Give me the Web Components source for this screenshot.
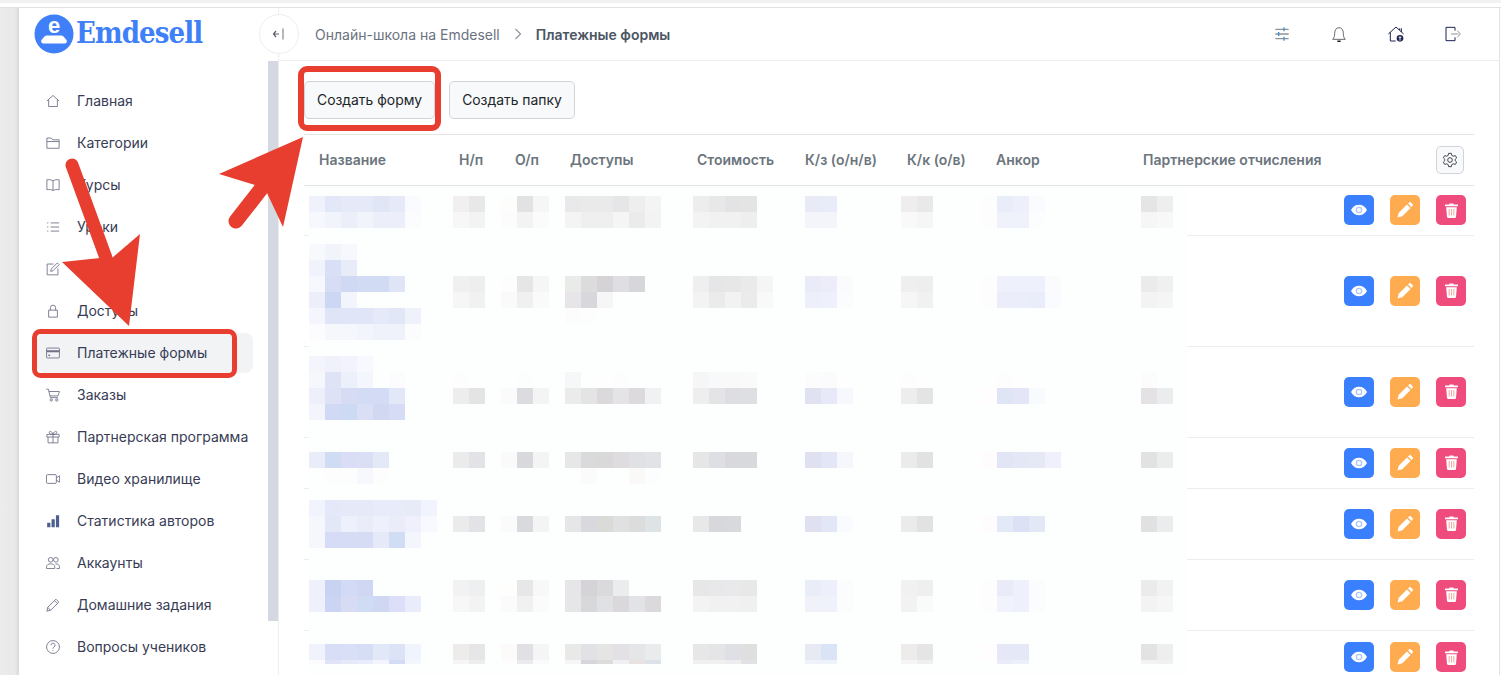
<!DOCTYPE html>
<html lang="ru">
<head>
<meta charset="utf-8">
<title>Платежные формы</title>
<style>
  html, body { margin: 0; padding: 0; height: 675px; overflow: hidden; background: #fff; }
  body { font-family: Inter, "Noto Sans", sans-serif; font-size: 14px; display: flex; flex-direction: column; }
</style>
</head>
<body>
<window-strip></window-strip>
<app-shell>
  <side-nav slot="side">
    <nav-item icon="home">Главная</nav-item>
    <nav-item icon="folder">Категории</nav-item>
    <nav-item icon="book">Курсы</nav-item>
    <nav-item icon="list">Уроки</nav-item>
    <nav-item icon="edit">Тесты</nav-item>
    <nav-item icon="lock">Доступы</nav-item>
    <nav-item icon="card" active>Платежные формы</nav-item>
    <nav-item icon="cart">Заказы</nav-item>
    <nav-item icon="gift">Партнерская программа</nav-item>
    <nav-item icon="video">Видео хранилище</nav-item>
    <nav-item icon="stats">Статистика авторов</nav-item>
    <nav-item icon="users">Аккаунты</nav-item>
    <nav-item icon="pencil">Домашние задания</nav-item>
    <nav-item icon="question">Вопросы учеников</nav-item>
  </side-nav>
  <top-bar></top-bar>
  <page-toolbar>
    <plain-button>Создать форму</plain-button>
    <plain-button>Создать папку</plain-button>
  </page-toolbar>
  <form-table></form-table>
</app-shell>
<red-markup></red-markup>

<script>
const ICONS = {
  home: '<path d="M1.500 12 12 2.500 22.500 12M4.500 9.500v12h15v-12"/>',
  folder: '<path d="M1.500 21V3.500H9l2.500 3h11V21z"/><path d="M1.500 9.500h21"/>',
  book: '<path d="M12 5C10 3 6 2.500 1.500 3v17c4.500-.5 8.500 0 10.500 1.500C14 20 18 19.500 22.500 20V3C18 2.500 14 3 12 5zM12 5v16.500"/>',
  list: '<path d="M8 5h14.500M8 12h14.500M8 19h14.500M2 5h2M2 12h2M2 19h2"/>',
  edit: '<path d="M13 3.500H2V22h18.500V11"/><path d="M19.500 1.500 22.500 4.500 12 15l-4 1 1-4z"/>',
  lock: '<path d="M4.500 10.500h15v12h-15z"/><path d="M7.500 10.500V6.500a4.500 4.500 0 0 1 9 0v4"/>',
  card: '<rect x="1" y="3.500" width="22" height="17" rx="1.500"/><path d="M1 9h22" stroke-width="3.500"/><path d="M4 16h3" stroke-width="2.500"/>',
  cart: '<path d="M.5 2h3.500l3.500 14.500h13M5 6h18l-2.500 7.500H7"/><circle cx="9" cy="20.500" r="2"/><circle cx="18.500" cy="20.500" r="2"/>',
  gift: '<path d="M1.500 7.500h21V12h-21zM3.500 12v10h17V12M12 7.500V22"/><path d="M12 7.500C10.500 2.500 6 .5 5.500 4c-.3 3 3.500 3.500 6.500 3.500zM12 7.500c1.500-5 6-7 6.500-3.500.3 3-3.500 3.500-6.500 3.500z"/>',
  video: '<rect x=".8" y="4.500" width="17" height="15" rx="2"/><path d="m17.800 10 5.500-3.500v11L17.800 14"/>',
  users: '<circle cx="8" cy="6.500" r="4"/><circle cx="17" cy="6.500" r="4"/><path d="M1 21.500v-3c0-3.500 3-5 7-5s7 1.500 7 5v3zM16 13.500c4.500 0 7 1.500 7 5v3h-5"/>',
  pencil: '<path d="m1.500 22.500 1.500-6.500L17 2l5 5-14 14z"/><path d="m14.500 4.500 5 5M3 16l5 5"/>',
  question: '<circle cx="12" cy="12" r="11"/><path d="M8.500 9a3.500 3.500 0 1 1 5.200 3c-1.200.7-1.700 1.500-1.700 3M12 17.500v1.500"/>',
  stats: '<path fill="#4d5f8f" stroke="none" d="M2 15h5.500v7.500H2zM9.500 9h5.500v13.500H9.500zM17 2h5.500v20.500H17z"/>'
};

class WindowStrip extends HTMLElement {
  connectedCallback() {
    this.attachShadow({ mode: 'open' }).innerHTML = `
      <style>
        :host { display: block; height: 3px; background: #f1f2f3; margin-bottom: 4px; flex: none; }
      </style>`;
  }
}

class AppShell extends HTMLElement {
  connectedCallback() {
    this.attachShadow({ mode: 'open' }).innerHTML = `
      <style>
        :host { display: flex; flex: 1; min-height: 0; border-top: 1px solid #e2e2e2; }
        .gutter {
          width: 19px;
          flex: none;
          background: linear-gradient(90deg, #ececec 0, #e9e9e9 15px, #d9d9d9 19px);
        }
        main {
          position: relative;
          z-index: 1;
          flex: 1;
          min-width: 0;
          display: flex;
          flex-direction: column;
          margin-right: 1px;
          border-right: 1px solid #e2e2e2;
          border-left: 1px solid #eeeeee;
        }
      </style>
      <div class="gutter"></div>
      <slot name="side"></slot>
      <main><slot></slot></main>`;
  }
}

class SideNav extends HTMLElement {
  connectedCallback() {
    this.attachShadow({ mode: 'open' }).innerHTML = `
      <style>
        :host { display: flex; flex-direction: column; width: 259px; flex: none; background: #fff; }
        .logo { height: 53px; flex: none; display: flex; align-items: center; padding-left: 15px; gap: 2px; overflow: hidden; }
        .logo svg { display: block; margin-top: -1px; flex: none; }
        .word {
          font-family: "DejaVu Serif", serif;
          font-stretch: condensed;
          font-weight: 700;
          font-size: 29px;
          line-height: 1;
          color: #3f80f8;
          letter-spacing: -0.9px;
          margin-top: -2px;
        }
        .body { flex: 1; display: flex; min-height: 0; }
        .list { flex: 1; display: flex; flex-direction: column; gap: 2px; padding: 20px 15px 0 18px; }
        .thumb { width: 10px; height: 560px; background: #d3d8e1; flex: none; }
      </style>
      <div class="logo">
        <svg width="40" height="40" viewBox="0 0 40 40">
          <circle cx="20" cy="20" r="19.500" fill="#3f80f8"/>
          <text x="20" y="19" text-anchor="middle" font-family="Liberation Sans, sans-serif" font-weight="700" font-size="22" fill="#fff">e</text>
          <path fill="#fff" d="M12.500 21.500h15c2 0 3 2.500 5 4.500 1 1.500 0 3.500-2 3.500h-21c-2 0-3-2-2-3.500 2-2 3-4.500 5-4.500z"/>
        </svg>
        <span class="word">Emdesell</span>
      </div>
      <div class="body">
        <div class="list"><slot></slot></div>
        <div class="thumb"></div>
      </div>`;
  }
}

class NavItem extends HTMLElement {
  connectedCallback() {
    const icon = ICONS[this.getAttribute('icon')] || '';
    this.attachShadow({ mode: 'open' }).innerHTML = `
      <style>
        :host {
          display: flex;
          align-items: center;
          flex: none;
          height: 40px;
          padding-left: 9px;
          gap: 17px;
          border-radius: 8px;
          color: #383c55;
          font-size: 14px;
          white-space: nowrap;
        }
        :host([active]) { background: #f1f3f5; }
        svg { width: 14px; height: 14px; flex: none; fill: none; stroke: #6f7187; stroke-width: 1.500; }
        .label { margin-top: -2px; }
      </style>
      <svg viewBox="0 0 24 24">${icon}</svg>
      <span class="label"><slot></slot></span>`;
  }
}

class TopBar extends HTMLElement {
  connectedCallback() {
    this.attachShadow({ mode: 'open' }).innerHTML = `
      <style>
        :host {
          display: flex;
          align-items: center;
          height: 52px;
          flex: none;
          border-bottom: 1px solid #eeeeee;
          font-size: 14px;
          color: #6b7280;
        }
        .toggle {
          width: 38px;
          height: 38px;
          margin-left: -20px;
          border: 1px solid #eeeeee;
          border-radius: 50%;
          background: #fff;
          display: flex;
          align-items: center;
          justify-content: center;
          flex: none;
        }
        .crumb { margin-left: 16px; }
        .sep { margin: 0 14px 0 14px; display: block; }
        .current { font-weight: 600; color: #4b5563; }
        .icons { margin-left: auto; display: flex; gap: 41px; padding-right: 38px; }
        .icons svg { display: block; width: 16px; height: 16px; fill: none; }
      </style>
      <div class="toggle">
        <svg width="14" height="14" viewBox="0 0 14 14" fill="none" stroke="#5b6068" stroke-width="1.200">
          <path d="M7 7H1.500M4 4 1.500 7 4 10"/><path d="M11 1.500v11" stroke="#888"/>
        </svg>
      </div>
      <span class="crumb">Онлайн-школа на Emdesell</span>
      <svg class="sep" width="8" height="12" viewBox="0 0 8 12" fill="none" stroke="#8a9099" stroke-width="1.100"><path d="m1.500 1 5 5-5 5"/></svg>
      <span class="current">Платежные формы</span>
      <div class="icons">
        <svg viewBox="0 0 24 24" stroke="#8d9298" stroke-width="2">
          <path d="M2 5h20M2 12h20M2 19h20"/>
          <path d="M15 2v6M7 9v6M15 16v6" stroke="#3f90d8"/>
        </svg>
        <svg viewBox="0 0 24 24" stroke="#5b6068" stroke-width="1.400">
          <path d="M2.500 20c2.500-2.500 3-5 3-9 0-5 2.500-8.500 6.500-8.500s6.500 3.500 6.500 8.500c0 4 .5 6.500 3 9z"/>
          <path d="M9.500 23h5" stroke="#222" stroke-width="2.500"/>
        </svg>
        <svg viewBox="0 0 24 24" stroke="#1d2350" stroke-width="1.500">
          <path d="M.5 12 12 1.500 23.500 12M3.500 9.500V22.500h8M20 9V3.500M17.500 6V3.500"/>
          <circle cx="18" cy="18.500" r="5" fill="#1d2350" stroke="none"/>
          <path d="M18 22v-6M16 18l2-2 2 2" stroke="#fff" stroke-width="1.400"/>
        </svg>
        <svg viewBox="0 0 24 24" stroke="#1d2350" stroke-width="1.500">
          <path d="M15 7V2H1.500v20H15v-5"/>
          <path d="M9 12h11M18.500 7l4.500 5-4.500 5" stroke="#8d9298"/>
        </svg>
      </div>`;
  }
}

class PageToolbar extends HTMLElement {
  connectedCallback() {
    this.attachShadow({ mode: 'open' }).innerHTML = `
      <style>
        :host { display: flex; gap: 14px; padding: 20px 0 15px 25px; flex: none; }
      </style>
      <slot></slot>`;
  }
}

class PlainButton extends HTMLElement {
  connectedCallback() {
    this.attachShadow({ mode: 'open' }).innerHTML = `
      <style>
        :host {
          display: flex;
          align-items: center;
          justify-content: center;
          box-sizing: border-box;
          height: 38px;
          padding: 0 12px 1px;
          background: #f8f9fa;
          border: 1px solid #ced4da;
          border-radius: 5px;
          color: #212529;
          font-size: 13.900px;
          white-space: nowrap;
        }
      </style>
      <slot></slot>`;
  }
}

class BlurBlock extends HTMLElement {
  connectedCallback() {
    const lines = (this.getAttribute('c') || '').split(';');
    const cells = lines.map((line) => `<div class="line">${line.split(',').map((c) =>
      `<i style="background:${c === '.' ? 'transparent' : '#' + c}"></i>`).join('')}</div>`).join('');
    this.attachShadow({ mode: 'open' }).innerHTML = `
      <style>
        :host {
          display: block;
          margin-top: calc(var(--pad, 0px) + ${Number(this.getAttribute('skip') || 0) * 16}px);
          max-height: var(--clip, none);
          overflow: hidden;
        }
        .line { display: flex; height: 16px; }
        i { display: block; width: 16px; height: 16px; flex: none; }
      </style>
      ${cells}`;
  }
}

class RowActions extends HTMLElement {
  connectedCallback() {
    this.attachShadow({ mode: 'open' }).innerHTML = `
      <style>
        :host {
          grid-column: -2;
          align-self: center;
          display: flex;
          gap: 16px;
          padding-right: 8px;
          margin-bottom: 2px;
        }
        span { width: 30px; height: 30px; border-radius: 5px; display: flex; align-items: center; justify-content: center; }
        svg { display: block; }
        .view { background: #3a7ffd; }
        .edit { background: #ffab4f; }
        .del { background: #ef4b7c; }
      </style>
      <span class="view">
        <svg width="16" height="12" viewBox="0 0 16 12"><path fill="#fff" d="M0 6c1.800-3.500 4.700-5.300 8-5.300S14.200 2.500 16 6c-1.800 3.500-4.700 5.300-8 5.300S1.800 9.500 0 6z"/><circle cx="8" cy="6" r="3.300" fill="#a9c7fe"/><circle cx="8" cy="6" r="2" fill="#fff"/></svg>
      </span>
      <span class="edit">
        <svg width="16" height="16" viewBox="0 0 16 16"><path fill="#fff" d="m.5 15.500 1.200-4.800 8.300-8.300 3.600 3.600-8.300 8.300zM11 1.500 12.300.3c.4-.4 1-.4 1.400 0l2 2c.4.4.4 1 0 1.400L14.500 5z"/></svg>
      </span>
      <span class="del">
        <svg width="13" height="15" viewBox="0 0 14 16"><path fill="#fff" d="M0 1.500h4.500L5 .5h4l.5 1H14V3.500H0zM1.300 4.500h11.400l-.8 10.200c-.1.8-.6 1.300-1.300 1.300H3.400c-.7 0-1.200-.5-1.300-1.300z"/><path stroke="#f7a7a0" stroke-width="1.100" d="M4.500 6.500v7M7 6.500v7M9.500 6.500v7"/></svg>
      </span>`;
  }
}

class FormRow extends HTMLElement {
  connectedCallback() {
    this.attachShadow({ mode: 'open' }).innerHTML = `
      <style>
        :host {
          display: grid;
          grid-template-columns: 144px 48px 64px 128px 112px 96px 80px 160px 1fr auto;
          align-items: start;
          box-sizing: border-box;
          height: ${this.getAttribute('h')}px;
          padding-left: 5px;
          --pad: ${this.getAttribute('pad')}px;
          background:
            linear-gradient(#ecedf1, #ecedf1) left bottom / 5px 1px no-repeat,
            linear-gradient(#ecedf1, #ecedf1) right bottom / 287px 1px no-repeat,
            linear-gradient(#fdfefe, #fdfefe) 5px 0 / 878px 100% no-repeat;
        }
      </style>
      <slot></slot>`;
  }
}

const ROWS = [
  { h: 50, pad: 10, cols: [
    ['f0f2fb,e3e8f8,e6eaf8,e6eaf8,e1e6f7,e6eaf8,fafbfe;f7f8fd,f2f4fc,eceef9,f2f4fc,eceefa,eceefa,fcfcfe'],
    ['f1efef,e8e8e8;f7f7f7,f3f3f3'],
    ['fdfdfc,e2e2e4,f6f6f6;fcfcfc,f3f3f3,fbfbfb'],
    ['e9e8ea,eaeaea,eaeaea,e6e6e8,eeeeee,f4f4f4;f4f4f5,efefef,efefef,f5f5f6,ebebeb,f3f3f3'],
    ['ededed,e8e8e9,e3e3e5,e4e4e4;f3f3f3,f1f1f1,f1f1f1,eeeeee'],
    ['e8ebf6,e8ebf8;f4f5fb,f4f5fb'],
    ['efeded,e9e9ea;f9f9f9,f6f6f6'],
    ['fdfdfd,e9ecf9,edf0fb,fafbfe;fdfdfd,eff1fb,eff1fb,fcfdfe'],
    ['e6e5e6,eeeeef;f6f6f6,f8f8f8']
  ] },
  { h: 111, pad: 8, cols: [
    ['f8f9fd,f2f4fc,f7f8fd;f0f3fb,d9e0f6,e8ecf9;f7f8fd,d6ddf5,d0d9f4,d2dbf4,d2dbf4,dfe5f7;eceffa,ccd8f3,f2f5fc;f5f6fd,dfe4f7,e0e5f7,e0e5f7,e6e9f8,e2e7f7,eff2fb;fcfcfe,f6f7fd,f6f7fd,f3f5fc,f0f2fb,f0f2fb,fcfcfe'],
    ['f0f0f0,eeeeee;f6f6f6,f1f1f1', 2],
    ['fdfdfd,e6e6e7,f6f6f6;fafafa,f0f0f0,fafafa', 2],
    ['e9ebe9,dcdcdc,d5d3d6,dfdfe3,d7d6db;e7e5e8,d8d7dc,f6f6f6;fcfcfc,fdfdfd', 2],
    ['efefef,e6e6e8,e7e7e8,eaeaea,f5f5f6;f3f3f3,ebebec,f2f2f3,ebebec,f8f9f8', 2],
    ['e9ecf8,ecedf9,fbfbfe;edf0fa,eef1fb,fbfcfe', 2],
    ['efefef,eeeeee;f6f6f6,f1f1f1', 2],
    ['fdfdfd,eef1fb,eef1fb,eef1fb,fbfbfe;fdfdfd,ebeefa,ebeefa,e9ecf9,fafbfe', 2],
    ['ebebeb,f0f0f0;f3f3f3,f5f5f5', 2]
  ] },
  { h: 91, pad: 9, cols: [
    ['f3f4fc,f0f2fb,f2f3fc,f8f9fe;f6f7fc,dee4f6,ecf0fa,f3f6fc,.,fcfcfe;edf0fa,dee2f6,d7dcf4,d2dcf4,d4dbf4,e2e8f8;f3f4fc,d1d9f4,ccdaf3,dadff6,d1d9f2,d6dcf5'],
    ['fdfdfd,fdfefe;ededed,e4e4e4', 1],
    ['.,fcfdfd,.;fbfbfb,dcdbe0,f4f4f4', 1],
    ['f6f7f8,.,fefefe,fdfdfd;ebebeb,e4e4e4,dbd9dc,e4e4e6,dcdadc,f0f1f2', 1],
    ['f6f6f6,f8f9fa,f9f9f9,f9faf9;eeeeee,e4e4e7,dedde1,dedfe3', 1],
    ['fcfcfd,fbfafd,fefefe;e1e2f1,e7e9f8,f7f8fd', 1],
    ['fdfdfd,fefefe;ededed,e4e4e4', 1],
    ['.,fdfdfd,fefefe,.;fffdfe,e0e5f6,e4e5f7,f7fbfe', 1],
    ['fcfcfc,.;e4e2e4,ebeced', 1]
  ] },
  { h: 51, pad: 14, cols: [
    ['e9ecf9,cfdcf4,d9ddf5,dadff6,e4e9f8;.,fdfdfe,fdfdfe,f7f8fe,fdfdfe'],
    ['ebebeb,e3e2e6'],
    ['fafafa,d9d8dd,f4f4f4'],
    ['e7e7e8,dad9dc,d9d9d9,dfdcdf,e0e1e4,e2e3e7;.,fbfbfb,.,.,fbf9f7,fcfdfe'],
    ['e6e6e7,dedfe4,d9d8dc,d8d9dc'],
    ['dfe0f0,e2e6f7,f6f7fc'],
    ['ebebeb,e2e2e2'],
    ['fffcfd,e1e5f6,e3e7f6,e5e9f6,eff0fb'],
    ['e2e2e3,ebecec']
  ] },
  { h: 71, pad: 11, cols: [
    ['f1f4fc,e4e8f8,e6e9f8,e6e9f8,e8ebf9,e8ebf9,e7ebf7,f2f4fd;f6f7fd,e2e8f8,eef0fb,eaecf9,eef0fb,eaedf9,eff0fb,f7f9fe;f6f7fd,d6dcf5,d6dcf5,d6dcf4,e5e9f8,d1dcf5,f3f6fd'],
    ['ebebeb,e3e3e7', 1],
    ['fbfbfb,d9dade,f4f4f4', 1],
    ['e6e6e8,d9d8de,dadad9,e0dfe1,dcdcdc,dee3e6', 1],
    ['e8e8e8,d8d8dc,d8d9dd', 1],
    ['dfe1f1,e2e7f7,fafbfe', 1],
    ['ebebeb,e2e2e2', 1],
    ['fffcfe,e3e9f6,dde1f6,e3e8f7', 1],
    ['e1e1e2,ebeced', 1]
  ] },
  { h: 71, pad: 20, cols: [
    ['eef1fb,c8d3f2,d3daf5,cfd7f2;eef1fb,cbd5f3,d7dcf4,cfdcf4,d0d7f3,dcdff7,e9ecfa'],
    ['f2f2f2,eeeff1;f7f7f7,f3f3f4'],
    ['fefefc,e7e7e9,f8f8f8;fbfbfb,f1f1f2,fbfbfb'],
    ['e6e6e8,d5d3d8,dadadc,ebecee;e6e6e8,d8d8da,dfe1e4,dbd8dc,e1e3e7,dbd9dc'],
    ['e7e7e8,e8e8ea,e9e9eb,e8e8e9;f3f3f3,f1f1f2,f1f1f2,f0f0f1'],
    ['e9edf7,edf0fa,fbfcfe;f1f1fa,eff1fb,fcfcfc'],
    ['f1f1f1,efefef;f2f2f2,f9fafa'],
    ['fdfdfd,e9ebf9,eef0fb,fbfcfe;fdfdfd,f0f2fc,eef1fb,fbfcfe'],
    ['ebebeb,f2f2f3;f3f3f3,f6f6f6']
  ] },
  { h: 54, pad: 13, clip: 20, cols: [
    ['f0f3fc,d7def6,d9dff6,d6def5,e3e8f8,dde3f7,f0f4fc;fbfbfe,dfe4f8,e7e9f9,e9ecfa,f4f5fc,d3dbf5,f4f6fd'],
    ['eeebeb,e6e5e8;f5f5f5,ededed'],
    ['fcfbf9,e1e0e4,f5f5f5;fdfdfd,ebebed,fafafc'],
    ['e9e9e8,e2e2e6,e5e5e4,e3e1e5,e5e6e8,e9ebed;f6f6f6,d8d6dc,dcdcdc,f0f0f2,e8e2e0,dbe2e8'],
    ['e7e7e7,e5e5e7,dfe0e5,dfdfe0;f0f0f1,f0f0f1,ededef,e2e2e6'],
    ['e7eaf3,dbe3f6;eff2f8,eef2fb'],
    ['eeebeb,e6e5e5;f6f5f5,f0eff0'],
    ['fffdfe,e6e8f7,e4e8f7;.,eaedf9,ecf0f9'],
    ['e3e3e4,eeeeef;f4f3f3,f1f1f2']
  ] }
];

const HEADERS = ['Название', 'Н/п', 'О/п', 'Доступы', 'Стоимость', 'К/з (о/н/в)', 'К/к (о/в)', 'Анкор', 'Партнерские отчисления'];

class FormTable extends HTMLElement {
  connectedCallback() {
    const head = HEADERS.map((h) => `<span>${h}</span>`).join('');
    const rows = ROWS.map((r) => `
      <form-row h="${r.h}" pad="${r.pad}"${r.clip ? ` style="--clip:${r.clip}px"` : ''}>
        ${r.cols.map(([c, skip]) => `<blur-block c="${c}" skip="${skip || 0}"></blur-block>`).join('')}
        <row-actions></row-actions>
      </form-row>`).join('');
    this.attachShadow({ mode: 'open' }).innerHTML = `
      <style>
        :host { display: block; margin-left: 25px; width: 1170px; flex: 1; min-height: 0; overflow: hidden; border-top: 1px solid #e4e4e6; }
        .head {
          display: grid;
          grid-template-columns: 140px 56px 55px 127px 108px 102px 89px 147px 1fr auto;
          align-items: center;
          height: 50px;
          padding: 0 10px 0 15px;
          border-bottom: 1px solid #e4e4e6;
          color: #6c757d;
          font-weight: 600;
          font-size: 14px;
          white-space: nowrap;
        }
        .head span { margin-top: -2px; }
        .cog {
          box-sizing: border-box;
          width: 28px;
          height: 28px;
          background: #f8f9fa;
          border: 1px solid #ced4da;
          border-radius: 5px;
          display: flex;
          align-items: center;
          justify-content: center;
        }
      </style>
      <div class="head">
        ${head}
        <div class="cog">
          <svg width="16" height="16" viewBox="0 0 24 24" fill="none" stroke="#3f444d" stroke-width="1.500">
            <path d="M10 2h4l.7 3 2.300 1.300 3-.9 2 3.400-2.200 2.100v2.200l2.200 2.100-2 3.400-3-.9-2.300 1.300-.7 3h-4l-.7-3L7 17.700l-3 .9-2-3.400 2.200-2.100v-2.200L2 8.800l2-3.400 3 .9L9.300 5z"/>
            <circle cx="12" cy="12" r="3.500"/>
          </svg>
        </div>
      </div>
      ${rows}`;
  }
}

class RedMarkup extends HTMLElement {
  connectedCallback() {
    this.attachShadow({ mode: 'open' }).innerHTML = `
      <style>
        :host { position: absolute; left: 0; top: 0; z-index: 5; width: 1501px; height: 675px; pointer-events: none; }
        svg { display: block; }
      </style>
      <svg width="1501" height="675" viewBox="0 0 1501 675" fill="none">
        <rect x="301" y="69" width="137" height="59" rx="6" stroke="#e83e30" stroke-width="6"/>
        <rect x="34.500" y="331.500" width="200" height="44" rx="6" stroke="#e83e30" stroke-width="5"/>
        <path d="M236 221 261 189" stroke="#e83e30" stroke-width="15" stroke-linecap="round"/>
        <path fill="#e83e30" d="M219 174 303 137 283 227 267 193 255 185z"/>
        <path d="M72 165 106 258" stroke="#e83e30" stroke-width="13" stroke-linecap="round"/>
        <path fill="#e83e30" d="M62 262 100 258 112 258 140 234 129 326z"/>
      </svg>`;
  }
}

customElements.define('window-strip', WindowStrip);
customElements.define('app-shell', AppShell);
customElements.define('side-nav', SideNav);
customElements.define('nav-item', NavItem);
customElements.define('top-bar', TopBar);
customElements.define('page-toolbar', PageToolbar);
customElements.define('plain-button', PlainButton);
customElements.define('blur-block', BlurBlock);
customElements.define('row-actions', RowActions);
customElements.define('form-row', FormRow);
customElements.define('form-table', FormTable);
customElements.define('red-markup', RedMarkup);
</script>
</body>
</html>
